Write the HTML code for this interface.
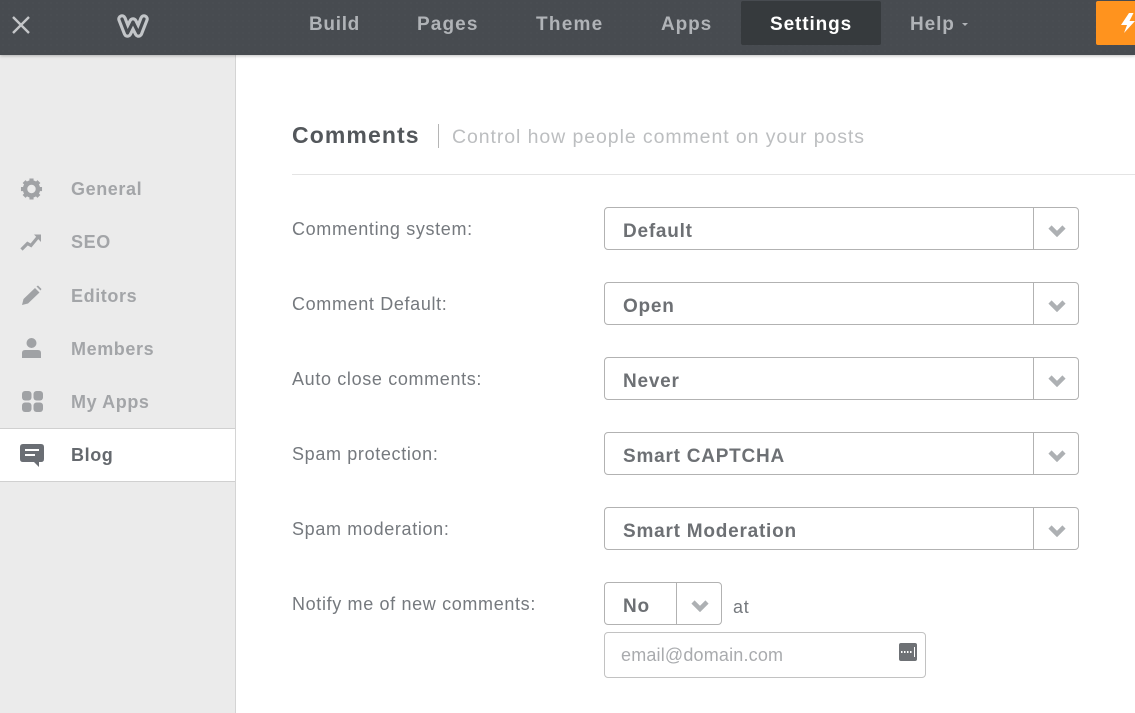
<!DOCTYPE html>
<html><head><meta charset="utf-8"><style>
html,body{margin:0;padding:0}
body{width:1135px;height:713px;overflow:hidden;position:relative;background:#fff;font-family:"Liberation Sans",sans-serif}
.a{position:absolute;white-space:nowrap}
#top{left:0;top:0;width:1135px;height:55px;background-color:#474b50;background-image:radial-gradient(#4f5358 0.6px,transparent 0.7px);background-size:6px 6px;box-shadow:0 1px 3px rgba(0,0,0,.25);z-index:3}
.nav{top:14px;font-size:19px;line-height:22px;font-weight:bold;color:#b0b3b7;letter-spacing:.9px}
#side{left:0;top:55px;width:235px;height:658px;background:#ebebeb;border-right:1px solid #d4d4d4}
.si{left:71px;font-size:18px;line-height:20px;font-weight:bold;color:#a3a5a8;letter-spacing:.6px}
.lb{left:292px;font-size:18px;line-height:20px;color:#75797e;letter-spacing:.65px}
.sel{left:604px;width:473px;height:41px;border:1px solid #b2b2b2;border-radius:4px;background:#fff}
.sel b{position:absolute;left:18px;top:13px;font-size:19px;line-height:21px;color:#6d7074;letter-spacing:.77px}
.sel i{position:absolute;right:44px;top:0;height:41px;border-left:1px solid #b2b2b2}
.sel svg{position:absolute;right:12px;top:17px}
</style></head><body>
<div class="a" id="top">
<svg class="a" style="left:11px;top:15px" width="20" height="20" viewBox="0 0 20 20"><path d="M2 2L18 18M18 2L2 18" stroke="#c4c6c9" stroke-width="2.4" fill="none"/></svg>
<svg class="a" style="left:116px;top:13px" width="34" height="26" viewBox="0 0 34 26"><path d="M6 6L11.500 20L17 9L22.500 20L28 6" fill="none" stroke="#c2c5c8" stroke-width="9.500" stroke-linejoin="round" stroke-linecap="round"/><path d="M6 6L11.500 20L17 9L22.500 20L28 6" fill="none" stroke="#474b50" stroke-width="3.200" stroke-linejoin="round" stroke-linecap="round"/></svg>
<div class="a nav" style="left:309px;letter-spacing:.7px">Build</div>
<div class="a nav" style="left:417px;letter-spacing:1.1px">Pages</div>
<div class="a nav" style="left:536px;letter-spacing:1.25px">Theme</div>
<div class="a nav" style="left:661px">Apps</div>
<div class="a" style="left:741px;top:1px;width:140px;height:44px;background:#363a3d;border-radius:2px"></div>
<div class="a nav" style="left:770px;color:#fff">Settings</div>
<div class="a nav" style="left:910px">Help</div>
<div class="a" style="left:962px;top:23px;width:0;height:0;border:3.500px solid transparent;border-top:3px solid #b0b3b7;border-bottom:0"></div>
<div class="a" style="left:1096px;top:1px;width:39px;height:44px;background:#ff931e;border-radius:2px 0 0 2px"></div>
<svg class="a" style="left:1120px;top:13px" width="15" height="21" viewBox="0 0 15 21"><path d="M9 0L1 12H7L4 20L15 8H9.500L13.500 0Z" fill="#fff"/></svg>
</div>

<div class="a" id="side"></div>
<div class="a" style="left:0;top:428px;width:235px;height:52px;background:#fff;border-top:1px solid #d0d0d0;border-bottom:1px solid #d0d0d0"></div>

<svg class="a" style="left:20px;top:178px" width="23" height="22" viewBox="0 0 24 24"><path d="M12 0.500V23.500M0.500 12H23.500M3.900 3.900L20.100 20.100M20.100 3.900L3.900 20.100" stroke="#a0a2a5" stroke-width="4.500"/><circle cx="12" cy="12" r="7" fill="none" stroke="#a0a2a5" stroke-width="5"/><circle cx="12" cy="12" r="4.600" fill="#ebebeb"/></svg>
<div class="a si" style="top:179px">General</div>
<svg class="a" style="left:20px;top:232px" width="22" height="20" viewBox="0 0 22 20"><path d="M1.500 17.500L7.500 11.500L11 13.500L18 5" fill="none" stroke="#a0a2a5" stroke-width="3.200"/><path d="M14 2.500H21V10Z" fill="#a0a2a5"/></svg>
<div class="a si" style="top:232px">SEO</div>
<svg class="a" style="left:21px;top:285px" width="21" height="21" viewBox="0 0 21 21"><path d="M1 20L2.500 14L14 3L18.500 7.500L7 18.500Z M15.500 1.500L17 0.500L20.500 4L19.500 5.500Z" fill="#a0a2a5"/></svg>
<div class="a si" style="top:286px">Editors</div>
<svg class="a" style="left:21px;top:337px" width="21" height="22" viewBox="0 0 21 22"><circle cx="10.500" cy="6" r="5" fill="#a0a2a5"/><path d="M1 21V16Q1 13 4 13H17Q20 13 20 16V21Z" fill="#a0a2a5"/></svg>
<div class="a si" style="top:339px">Members</div>
<svg class="a" style="left:22px;top:391px" width="21" height="21" viewBox="0 0 21 21" fill="#a0a2a5"><rect width="9.500" height="9.500" rx="3"/><rect x="11.500" width="9.500" height="9.500" rx="3"/><rect y="11.500" width="9.500" height="9.500" rx="3"/><rect x="11.500" y="11.500" width="9.500" height="9.500" rx="3"/></svg>
<div class="a si" style="top:392px">My Apps</div>
<svg class="a" style="left:20px;top:444px" width="24" height="23" viewBox="0 0 24 23"><path d="M3 0H21Q24 0 24 3V15Q24 18 21 18H19V23L14 18H3Q0 18 0 15V3Q0 0 3 0Z" fill="#6a6e74"/><path d="M5 6H19M5 11H15" stroke="#fff" stroke-width="2"/></svg>
<div class="a si" style="top:445px;color:#65696e">Blog</div>

<div class="a" style="left:292px;top:121px;font-size:23px;line-height:28px;font-weight:bold;color:#53575b;letter-spacing:1.1px">Comments</div>
<div class="a" style="left:438px;top:124px;width:1px;height:24px;background:#b5b5b5"></div>
<div class="a" style="left:452px;top:126px;font-size:19.500px;line-height:22px;color:#bcbec0;letter-spacing:.92px">Control how people comment on your posts</div>
<div class="a" style="left:292px;top:174px;width:843px;height:1px;background:#e4e4e4"></div>

<div class="a lb" style="top:219px">Commenting system:</div>
<div class="a sel" style="top:207px"><b>Default</b><i></i><svg width="18" height="12" viewBox="0 0 18 12"><path d="M2 2L9 9L16 2" fill="none" stroke="#adb0b3" stroke-width="4.500"/></svg></div>
<div class="a lb" style="top:294px">Comment Default:</div>
<div class="a sel" style="top:282px"><b>Open</b><i></i><svg width="18" height="12" viewBox="0 0 18 12"><path d="M2 2L9 9L16 2" fill="none" stroke="#adb0b3" stroke-width="4.500"/></svg></div>
<div class="a lb" style="top:369px">Auto close comments:</div>
<div class="a sel" style="top:357px"><b>Never</b><i></i><svg width="18" height="12" viewBox="0 0 18 12"><path d="M2 2L9 9L16 2" fill="none" stroke="#adb0b3" stroke-width="4.500"/></svg></div>
<div class="a lb" style="top:444px">Spam protection:</div>
<div class="a sel" style="top:432px"><b>Smart CAPTCHA</b><i></i><svg width="18" height="12" viewBox="0 0 18 12"><path d="M2 2L9 9L16 2" fill="none" stroke="#adb0b3" stroke-width="4.500"/></svg></div>
<div class="a lb" style="top:519px">Spam moderation:</div>
<div class="a sel" style="top:507px"><b>Smart Moderation</b><i></i><svg width="18" height="12" viewBox="0 0 18 12"><path d="M2 2L9 9L16 2" fill="none" stroke="#adb0b3" stroke-width="4.500"/></svg></div>
<div class="a lb" style="top:594px">Notify me of new comments:</div>
<div class="a sel" style="top:582px;width:116px"><b>No</b><i></i><svg width="18" height="12" viewBox="0 0 18 12"><path d="M2 2L9 9L16 2" fill="none" stroke="#adb0b3" stroke-width="4.500"/></svg></div>
<div class="a" style="left:733px;top:597px;font-size:18px;line-height:20px;color:#75797e;letter-spacing:.8px">at</div>
<div class="a" style="left:604px;top:632px;width:320px;height:44px;border:1px solid #c2c2c2;border-radius:4px;background:#fff"></div>
<div class="a" style="left:621px;top:645px;font-size:18px;line-height:21px;color:#a9abae;letter-spacing:.18px">email@domain.com</div>
<svg class="a" style="left:899px;top:643px" width="18" height="18" viewBox="0 0 18 18"><rect width="18" height="18" rx="2" fill="#6e7175"/><path d="M2 9H3.500M5 9H6.500M8 9H9.500M11 9H12.500" stroke="#fff" stroke-width="2"/><path d="M15.500 4V14" stroke="#fff" stroke-width="1"/></svg>
</body></html>
